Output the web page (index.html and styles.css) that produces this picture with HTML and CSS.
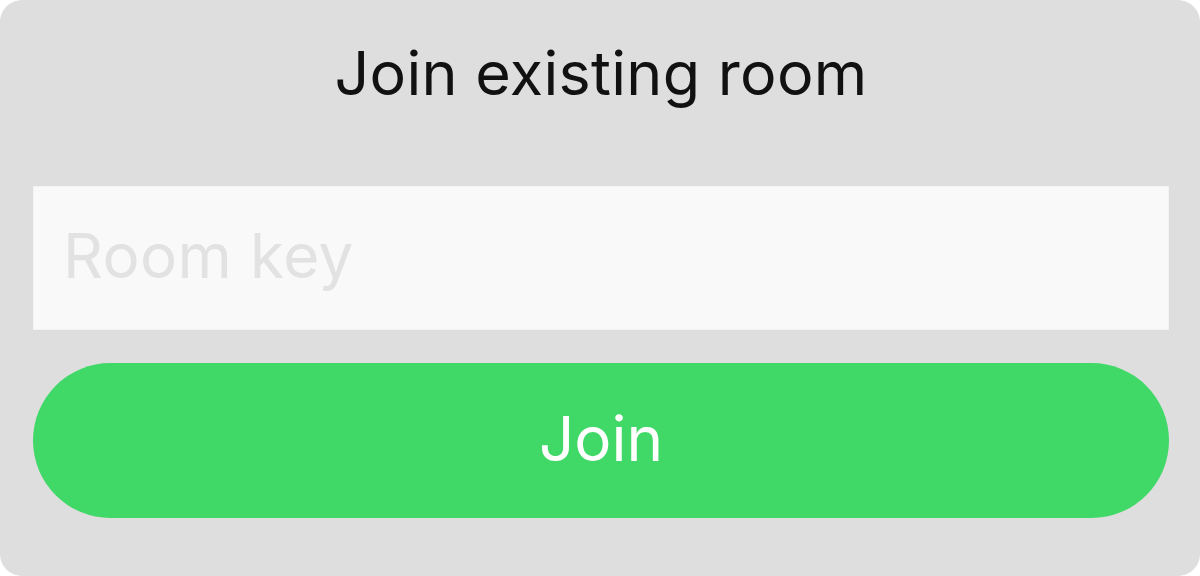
FILE: index.html
```html
<!DOCTYPE html>
<html>
<head>
<meta charset="utf-8">
<link rel="stylesheet" href="styles.css">
</head>
<body>
<div class="card">
  <h1 class="title">Join existing room</h1>
  <input class="key" type="text" placeholder="Room key">
  <button class="join">Join</button>
</div>
</body>
</html>
```
FILE: styles.css
```css
html, body {
  margin: 0;
  padding: 0;
  background: #ffffff;
}
.card {
  box-sizing: border-box;
  width: 1200px;
  height: 576px;
  background: #dedede;
  border-radius: 22px;
  padding: 0 31px 0 33px;
  display: flex;
  flex-direction: column;
  font-family: Inter, "Noto Sans", sans-serif;
}
.title {
  margin: 0;
  height: 186px;
  box-sizing: border-box;
  padding-top: 37px;
  font-size: 61px;
  font-weight: 400;
  line-height: 72px;
  letter-spacing: 0.3px;
  text-align: center;
  color: #111111;
}
.key {
  box-sizing: border-box;
  width: 100%;
  height: 144px;
  margin: 0;
  border: 1px solid #f3f3f3;
  background: #f9f9f9;
  padding: 0 0 6px 29px;
  font-family: Inter, "Noto Sans", sans-serif;
  font-size: 62px;
  letter-spacing: 0.4px;
  color: #222;
  outline: none;
}
.key::placeholder {
  color: #e2e2e2;
}
.join {
  margin-top: 33px;
  width: 100%;
  height: 155px;
  border: none;
  border-radius: 78px;
  background: #40d867;
  color: #ffffff;
  font-family: Inter, "Noto Sans", sans-serif;
  font-size: 62px;
  font-weight: 400;
  padding: 0 0 4px 0;
}
```
